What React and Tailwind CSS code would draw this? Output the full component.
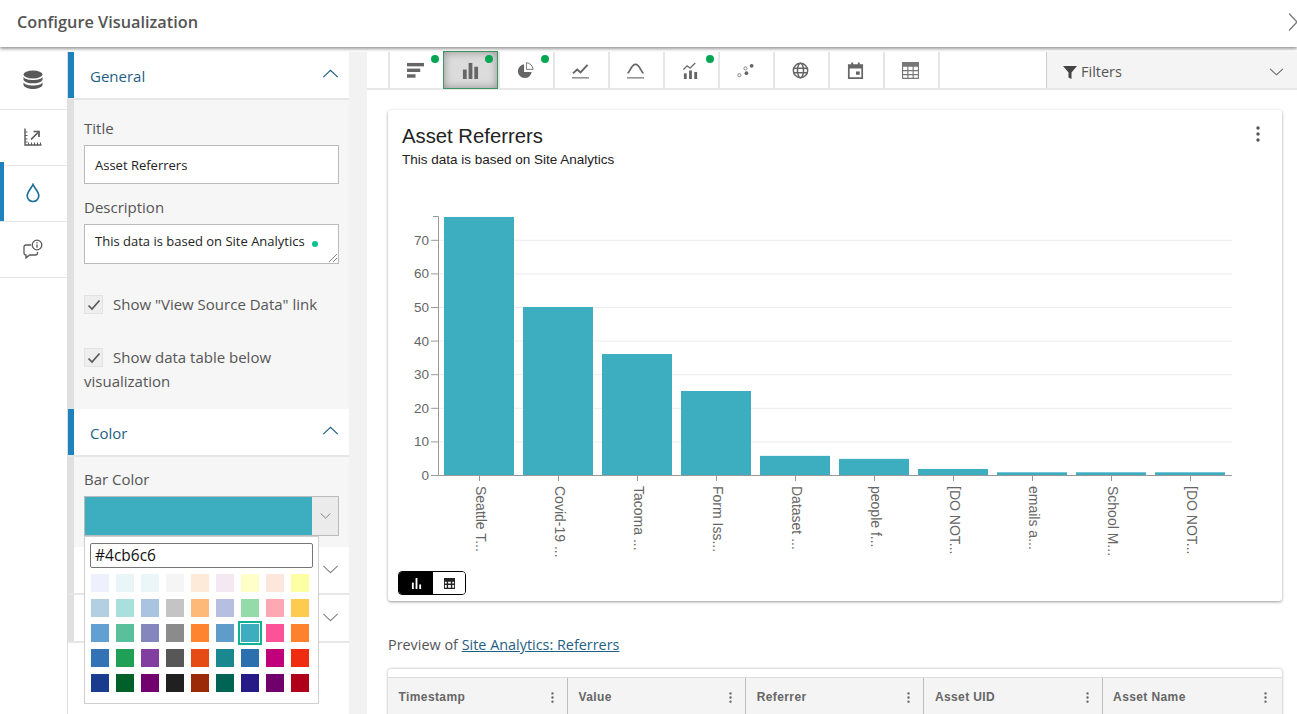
import React from "react";

const sans = "font-['Open_Sans',sans-serif]";

const swatches = [
  ["#eef1fd", "#e9f6f8", "#eaf6f7", "#f5f5f5", "#fdead9", "#f4e9f3", "#ffffc8", "#fde6dc", "#fdffa3"],
  ["#b3d0e3", "#a9dfdc", "#a9c4e0", "#c4c4c4", "#fcb978", "#b6bfdf", "#94dbaa", "#fda8b3", "#fecb50"],
  ["#62a0d3", "#5ac09b", "#8686bf", "#8b8b8b", "#fe842f", "#5f9cca", "#3caebf", "#fb5298", "#fe812d"],
  ["#3372b5", "#20a056", "#813fa0", "#575757", "#e54b14", "#1a888f", "#2b6faf", "#c1007c", "#ef2b10"],
  ["#193c8e", "#00602a", "#72006f", "#202020", "#9a2a08", "#006454", "#261b86", "#6f006c", "#b00019"],
];

const bars = [
  { v: 76.8, label: "Seattle T..." },
  { v: 50, label: "Covid-19 ..." },
  { v: 36, label: "Tacoma ..." },
  { v: 25, label: "Form Iss..." },
  { v: 5.7, label: "Dataset ..." },
  { v: 4.8, label: "people f..." },
  { v: 1.8, label: "[DO NOT..." },
  { v: 0.8, label: "emails a..." },
  { v: 0.8, label: "School M..." },
  { v: 0.8, label: "[DO NOT..." },
];

const Chevron = ({ up, className }) => (
  <svg viewBox="0 0 18 10" className={className} fill="none" stroke="currentColor" strokeWidth="1.3">
    <path d={up ? "M1 9l8-7.5L17 9" : "M1 1l8 7.5L17 1"} />
  </svg>
);

const Kebab = ({ className }) => (
  <svg viewBox="0 0 4 16" className={className} fill="currentColor">
    <circle cx="2" cy="2" r="1.7" />
    <circle cx="2" cy="8" r="1.7" />
    <circle cx="2" cy="14" r="1.7" />
  </svg>
);

const Check = () => (
  <span className="flex h-[19px] w-[19px] shrink-0 items-center justify-center border border-[#e2e2e2] bg-[#eeeeee]">
    <svg viewBox="0 0 14 12" className="h-3 w-[14px]" fill="none" stroke="#555" strokeWidth="1.6">
      <path d="M1.5 6.5l3.5 3.5 7.5-8.5" />
    </svg>
  </span>
);

const navIcons = [
  <svg viewBox="0 0 20 20" className="h-5 w-5" fill="#595959">
    <ellipse cx="10" cy="4.500" rx="9.500" ry="4" />
    <path d="M.5 7C2 9.200 6 10 10 10s8-.8 9.500-3v3C18 12.500 14 13.300 10 13.300S2 12.500 .5 10z" />
    <path d="M.5 12.500C2 14.700 6 15.500 10 15.500s8-.8 9.500-3v2.700C18 17.800 14 19 10 19S2 17.800 .5 15.200z" />
  </svg>,
  <svg viewBox="0 0 18 18" className="h-[18px] w-[18px]" fill="none" stroke="#595959" strokeWidth="1.400">
    <path d="M1 .5v16.500h16.500" />
    <path d="M1 4h2.500M1 7.500h2.500M1 11h2.500M1 14h2.500M4.500 17v-2.500M7.500 17v-2.500M10.500 17v-2.500M13.500 17v-2.500M16.500 17v-2.500" strokeWidth="1" />
    <path d="M7 11.500l7-7" strokeWidth="1.700" />
    <path d="M9.500 3.500h5.500v5.500" strokeWidth="1.700" />
  </svg>,
  <svg viewBox="0 0 14 20" className="h-5 w-[14px]" fill="none" stroke="#1f6f99" strokeWidth="1.700">
    <path d="M7 1.500C5.500 5 1.200 8.500 1.200 12.700a5.800 5.800 0 0 0 11.600 0C12.800 8.500 8.500 5 7 1.500z" />
  </svg>,
  <svg viewBox="0 0 20 20" className="h-5 w-5" fill="none" stroke="#595959" strokeWidth="1.300">
    <path d="M8 6H3A1.800 1.800 0 0 0 1 7.800v6.500A1.800 1.800 0 0 0 3 16v3l3.500-3h6A2 2 0 0 0 14.500 14v-1" />
    <circle cx="14" cy="6" r="4.800" />
    <path d="M14 5.500v3.200M14 3.300v1.200" />
  </svg>,
];

const G = "#666666";
const toolIcons = [
  { dot: true, icon: (
    <svg viewBox="0 0 18 18" className="h-[17px] w-[17px]" fill={G}>
      <rect y="1" width="18" height="3.600" />
      <rect y="7" width="14" height="3.600" />
      <rect y="13" width="9" height="3.600" />
    </svg>
  ) },
  { dot: true, selected: true, icon: (
    <svg viewBox="0 0 18 18" className="h-[17px] w-[17px]" fill={G}>
      <rect x="1" y="8" width="4" height="10" />
      <rect x="7" y="1" width="4" height="17" />
      <rect x="13" y="5" width="4" height="13" />
    </svg>
  ) },
  { dot: true, icon: (
    <svg viewBox="0 0 18 18" className="h-[17px] w-[17px]">
      <path d="M7.500 2.500a7.300 7.300 0 1 0 8 8h-8z" fill={G} />
      <path d="M10 .8a7.500 7.500 0 0 1 7 7h-7z" fill="#fff" stroke={G} strokeWidth=".9" />
    </svg>
  ) },
  { icon: (
    <svg viewBox="0 0 18 18" className="h-[17px] w-[17px]" fill="none" stroke={G} strokeWidth="2">
      <path d="M1 12l4.500-4 3.500 3 7.500-8" />
      <path d="M0 16.800h18" strokeWidth="1.200" />
    </svg>
  ) },
  { icon: (
    <svg viewBox="0 0 18 18" className="h-[17px] w-[17px]" fill="none" stroke={G} strokeWidth="1.800">
      <path d="M.5 12c2.500-1 4-9.500 8.500-9.500s6 8.500 8.500 9.500" />
      <path d="M0 16.800h18" strokeWidth="1.200" />
    </svg>
  ) },
  { dot: true, icon: (
    <svg viewBox="0 0 18 18" className="h-[17px] w-[17px]" fill={G}>
      <rect x="2" y="12" width="3" height="6" />
      <rect x="7.500" y="9" width="3" height="9" />
      <rect x="13" y="10.500" width="3" height="7.500" />
      <path d="M1.500 8l4-4 3 2.500L14 1" fill="none" stroke={G} strokeWidth="1.300" />
    </svg>
  ) },
  { icon: (
    <svg viewBox="0 0 18 18" className="h-[17px] w-[17px]" fill={G}>
      <circle cx="2.500" cy="14" r="1.700" fill="none" stroke={G} strokeWidth=".8" />
      <circle cx="9" cy="6.800" r="1.700" fill="none" stroke={G} strokeWidth=".8" />
      <circle cx="10" cy="11.800" r="2" />
      <circle cx="15.500" cy="4" r="2" />
    </svg>
  ) },
  { icon: (
    <svg viewBox="0 0 18 18" className="h-[17px] w-[17px]" fill="none" stroke={G} strokeWidth="1.600">
      <circle cx="9" cy="9" r="7.600" />
      <ellipse cx="9" cy="9" rx="3.200" ry="7.600" />
      <path d="M2 6.500h14M2 11.500h14" />
    </svg>
  ) },
  { icon: (
    <svg viewBox="0 0 18 18" className="h-[17px] w-[17px]" fill={G}>
      <path d="M1 2.500h3.500V.5h2v2h5v-2h2v2H17v15.500H1zm1.800 4.500v9.200h12.400V7z" />
      <rect x="9.500" y="10" width="4" height="3.500" />
    </svg>
  ) },
  { icon: (
    <svg viewBox="0 0 18 18" className="h-[17px] w-[17px]" fill="#777777">
      <path d="M0 0h18v18H0zm1.200 5v3.500h4.400V5zm5.600 0v3.500h4.400V5zm5.600 0v3.500h4.400V5zM1.200 9.700v3h4.400v-3zm5.600 0v3h4.400v-3zm5.600 0v3h4.400v-3zM1.200 14v2.800h4.400V14zm5.600 0v2.800h4.400V14zm5.600 0v2.800h4.400V14z" fillRule="evenodd" />
    </svg>
  ) },
];

function AccordionHeader({ title, active, open }) {
  return (
    <div className="flex h-[48px] items-center justify-between border-b-2 border-[#e6e6e6] bg-white">
      <div className="flex h-full items-center">
        <span className={active ? "h-full w-[6px] bg-[#1e82bd]" : "h-full w-[6px] bg-[#e0e0e0]"} />
        {title && <span className="mt-[3px] ml-4 text-[15px] text-[#1f5f85]">{title}</span>}
      </div>
      <Chevron up={open} className={open ? "mr-[10px] mb-[3px] h-[9px] w-[17px] text-[#1f5f85]" : "mr-[10px] mb-[2px] h-[9px] w-[17px] text-[#888888]"} />
    </div>
  );
}

function Sidebar() {
  return (
    <div className="flex h-full w-[68px] shrink-0 flex-col border-r border-[#dddddd] bg-white">
      {navIcons.map((icon, i) => (
        <div key={i} className={i === 0 ? "relative flex h-[58px] items-center justify-center border-b border-[#e6e6e6] pr-[2px] pb-[2px]" : "relative flex h-[56px] items-center justify-center border-b border-[#e6e6e6] pr-[2px] pb-[2px]"}>
          {i === 2 && <span className="absolute top-[-4px] bottom-0 left-0 w-1 bg-[#1e82bd]" />}
          {icon}
        </div>
      ))}
    </div>
  );
}

function ColorPopup() {
  return (
    <div className="absolute top-[79px] left-[10px] z-10 h-[168px] w-[235px] border border-[#cfcfcf] bg-white pt-[6px]">
      <div className="ml-[5px] flex h-[25px] w-[223px] items-center rounded-[2px] border border-[#767676] px-1 text-[15.500px] text-[#111111]">#4cb6c6</div>
      <div className="mt-[6px] ml-[6px] flex flex-col gap-[7px]">
        {swatches.map((row, r) => (
          <div key={r} className="flex gap-[7px]">
            {row.map((c, i) => (
              <span key={i} className="relative h-[18px] w-[18px]" style={{ backgroundColor: c }}>
                {r === 2 && i === 6 && (
                  <span className="absolute -inset-[3px] border-2 border-[#0db394]" />
                )}
              </span>
            ))}
          </div>
        ))}
      </div>
    </div>
  );
}

function Panel() {
  return (
    <div className="relative h-full w-[281px] shrink-0 bg-white">
      <AccordionHeader title="General" active open />
      <div className="h-[309px] border-l-[6px] border-[#e0e0e0] bg-[#f6f6f6] pt-[18px] pr-[10px] pl-[10px] text-[15px] text-[#555555]">
        <div className="leading-[20px]">Title</div>
        <div className="mt-[7px] flex h-[39px] items-center border border-[#bbbbbb] bg-white pt-[2px] pl-[10px] text-[13px] text-[#222222]">Asset Referrers</div>
        <div className="mt-[13px] leading-[20px]">Description</div>
        <div className="relative mt-[7px] flex h-[40px] items-start border border-[#bbbbbb] bg-white pt-[7px] pl-[10px] text-[13px] text-[#222222]">
          This data is based on Site Analytics
          <span className="absolute top-[16px] right-[20px] h-[6px] w-[6px] rounded-full bg-[#0cc28e]" />
          <svg viewBox="0 0 8 8" className="absolute right-[1px] bottom-[1px] h-2 w-2" stroke="#666" strokeWidth=".8">
            <path d="M0 8l8-8M4 8l4-4" />
          </svg>
        </div>
        <div className="mt-[31px] flex h-[19px] items-center gap-[10px]">
          <Check />
          <span>Show "View Source Data" link</span>
        </div>
        <div className="mt-[34px] flex h-[19px] items-center gap-[10px]">
          <Check />
          <span>Show data table below</span>
        </div>
        <div className="mt-[4px] leading-[20px]">visualization</div>
      </div>
      <AccordionHeader title="Color" active open />
      <div className="relative h-[90px] border-l-[6px] border-[#e0e0e0] bg-[#f6f6f6] pt-[12px] pl-[10px] text-[15px] text-[#555555]">
        <div className="leading-[20px]">Bar Color</div>
        <div className="mt-[7px] flex h-[40px] w-[255px] border border-[#bbbbbb]">
          <div className="w-[227px] bg-[#3caebf]" />
          <div className="flex flex-1 items-center justify-center bg-[#ebebeb]">
            <Chevron className="h-[6px] w-[11px] text-[#666666]" />
          </div>
        </div>
        <ColorPopup />
      </div>
      <AccordionHeader />
      <AccordionHeader />
    </div>
  );
}

function BarChart() {
  const y = (v) => 259 - v * 3.36;
  return (
    <svg width="880" height="390" className="font-['Liberation_Sans',sans-serif]">
      {[10, 20, 30, 40, 50, 60, 70].map((v) => (
        <line key={v} x1="39" x2="832" y1={y(v) + 0.5} y2={y(v) + 0.5} stroke="#ececec" />
      ))}
      {bars.map((b, i) => (
        <g key={i}>
          <rect x={44 + i * 79} y={y(b.v)} width="70" height={b.v * 3.36} fill="#3caebf" />
          <line x1={79.500 + i * 79} x2={79.500 + i * 79} y1="259" y2="265" stroke="#999" />
          <text transform={`translate(${76 + i * 79} 270) rotate(90)`} fontSize="14" fill="#666">{b.label}</text>
        </g>
      ))}
      {[0, 10, 20, 30, 40, 50, 60, 70].map((v) => (
        <g key={v}>
          <line x1="31" x2="38" y1={y(v) + 0.5} y2={y(v) + 0.5} stroke="#999" />
          <text x="29" y={y(v) + 5} textAnchor="end" fontSize="13.500" fill="#666">{v}</text>
        </g>
      ))}
      <path d="M33 0.500h5.500V259.500H832" fill="none" stroke="#999" />
    </svg>
  );
}

function ChartCard() {
  return (
    <div className="relative h-[491px] w-[894px] rounded-[3px] bg-white pt-[14px] pl-[14px] shadow-[0_1px_3px_rgba(0,0,0,0.4)] font-['Liberation_Sans',sans-serif]">
      <div className="text-[20.300px] leading-[24px] text-[#222222]">Asset Referrers</div>
      <div className="mt-[3px] text-[13.500px] leading-[18px] text-[#222222]">This data is based on Site Analytics</div>
      <Kebab className="absolute top-[16px] right-[22px] h-4 w-1 text-[#555555]" />
      <div className="mt-[47px] -ml-[2px]">
        <BarChart />
      </div>
      <div className="absolute bottom-[6px] left-[10px] flex h-[24px] w-[68px] overflow-hidden rounded-[4px] border border-black">
        <span className="flex w-[34px] items-center justify-center bg-black">
          <svg viewBox="0 0 12 12" className="h-[11px] w-[11px]" fill="#fff">
            <rect x="1" y="5" width="2" height="7" />
            <rect x="5" y="0" width="2" height="12" />
            <rect x="9" y="7" width="2" height="5" />
          </svg>
        </span>
        <span className="flex flex-1 items-center justify-center bg-white">
          <svg viewBox="0 0 12 12" className="h-[11px] w-[11px]" fill="#222">
            <path fillRule="evenodd" d="M0 0h12v12H0zm1 4v2h2V4zm3.500 0v2h3V4zM9 4v2h2V4zM1 7.500v3h2v-3zm3.500 0v3h3v-3zm4.500 0v3h2v-3z" />
          </svg>
        </span>
      </div>
    </div>
  );
}

function Table() {
  const cols = ["Timestamp", "Value", "Referrer", "Asset UID", "Asset Name"];
  return (
    <div className="mt-[14px] w-[894px] rounded-t-[3px] bg-white pt-[8px] shadow-[0_0_3px_rgba(0,0,0,0.35)]">
      <div className="grid h-[60px] grid-cols-[179px_repeat(4,178.2px)] border-t border-[#dddddd] bg-[#f4f4f4]">
        {cols.map((c, i) => (
          <div key={c} className={i > 0 ? "border-l border-[#bdbdbd]" : ""}>
            <div className="flex h-[38px] items-center justify-between pr-[13px] pl-[10.500px] text-[12px] font-bold tracking-[0.4px] text-[#666666] font-['Liberation_Sans',sans-serif]">
              {c}
              <Kebab className="h-[11px] w-[3px] text-[#666666]" />
            </div>
          </div>
        ))}
      </div>
    </div>
  );
}

function Toolbar() {
  return (
    <div className="flex h-[38px] border-b-2 border-[#e8e8e8] bg-white">
      <div className="w-[21px] shrink-0" />
      {toolIcons.map((t, i) => (
        <div
          key={i}
          className={
            t.selected
              ? "relative -my-px flex w-[55px] shrink-0 items-center justify-center border border-[#3f9463] bg-[#dcdcdc] shadow-[inset_0_0_8px_rgba(0,0,0,0.35)]"
              : "relative flex w-[55px] shrink-0 items-center justify-center border-l-2 border-[#e6e6e6] pr-[2px]"
          }
        >
          {t.icon}
          {t.dot && <span className="absolute top-[3px] right-[4px] h-2 w-2 rounded-full bg-[#00a651]" />}
        </div>
      ))}
      <div className="w-[108px] shrink-0 border-l-2 border-[#e6e6e6]" />
      <div className="flex flex-1 items-center justify-between border-l border-[#cccccc] bg-[#f4f4f4] pr-[13px] pl-[16px] text-[14.500px] text-[#555555]">
        <span className="mt-[3px] flex items-center gap-1">
          <svg viewBox="0 0 14 14" className="h-[14px] w-[14px]" fill="#444">
            <path d="M0 1h14L8.500 7.500V14L5.500 12.500V7.500z" />
          </svg>
          Filters
        </span>
        <Chevron className="mt-[3px] h-2 w-[15px] text-[#666666]" />
      </div>
    </div>
  );
}

export default function App() {
  return (
    <div className={`flex h-[714px] w-[1297px] flex-col overflow-hidden bg-white ${sans}`}>
      <div className="relative z-20 flex h-[47px] shrink-0 items-center justify-between bg-white pb-[3px] pl-[17px] shadow-[0_2px_3px_rgba(0,0,0,0.4)]">
        <span className="text-[16.300px] font-semibold text-[#555555]">Configure Visualization</span>
        <svg viewBox="0 0 8 18" className="mr-0 h-[18px] w-2" fill="none" stroke="#777" strokeWidth="1.200">
          <path d="M0 .5l8 8.500-8 8.500" />
        </svg>
      </div>
      <div className="mt-[5px] flex min-h-0 flex-1">
        <Sidebar />
        <Panel />
        <div className="w-[18px] shrink-0 bg-[#f2f2f2]" />
        <div className="min-w-0 flex-1">
          <Toolbar />
          <div className="pt-[20px] pl-[21px]">
            <ChartCard />
            <div className="mt-[34px] text-[14.400px] leading-[20px] text-[#555555]">
              Preview of <span className="text-[#1f5f85] underline">Site Analytics: Referrers</span>
            </div>
            <Table />
          </div>
        </div>
      </div>
    </div>
  );
}
